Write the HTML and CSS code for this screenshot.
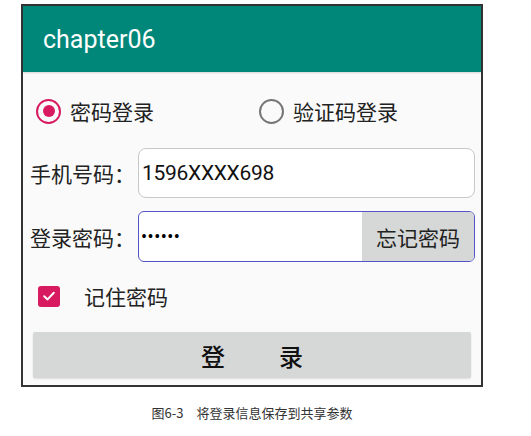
FILE: index.html
```html
<!DOCTYPE html>
<html lang="zh-CN">
<head>
<meta charset="utf-8">
<title>chapter06</title>
<link rel="stylesheet" href="styles.css">
</head>
<body>
<div class="page">
  <div class="phone">
    <div class="appbar">chapter06</div>
    <div class="content">
      <div class="radio-row">
        <div class="radio-item">
          <span class="radio checked"></span>
          <span class="radio-label">密码登录</span>
        </div>
        <div class="radio-item second">
          <span class="radio"></span>
          <span class="radio-label">验证码登录</span>
        </div>
      </div>
      <div class="field-row">
        <span class="field-label">手机号码：</span>
        <div class="input">1596XXXX698</div>
      </div>
      <div class="field-row pw-row">
        <span class="field-label">登录密码：</span>
        <div class="input focused">
          <span class="dots">••••••</span>
          <span class="forget">忘记密码</span>
        </div>
      </div>
      <div class="check-row">
        <span class="checkbox">
          <svg width="14" height="14" viewBox="0 0 14 14"><path d="M2.2 7.2 L5.6 10.4 L11.8 3.8" fill="none" stroke="#fff" stroke-width="2" stroke-linecap="round" stroke-linejoin="round"/></svg>
        </span>
        <span class="check-label">记住密码</span>
      </div>
      <div class="login-btn"><span>登</span><span>录</span></div>
    </div>
  </div>
  <div class="caption">图6-3　将登录信息保存到共享参数</div>
</div>
</body>
</html>
```
FILE: styles.css
```css
html, body {
  margin: 0;
  padding: 0;
  background: #ffffff;
}
body {
  font-family: "Noto Sans CJK SC", "Noto Sans", sans-serif;
  color: #222;
}
.page {
  width: 531px;
  padding-top: 4px;
}
.phone {
  margin-left: 21px;
  width: 458px;
  border: 2px solid #333;
  background: #fafafa;
}
.appbar {
  height: 66px;
  background: #00877a;
  color: #fff;
  font-family: Roboto, "Noto Sans", sans-serif;
  font-size: 25px;
  display: flex;
  align-items: center;
  padding-left: 20px;
  box-shadow: 0 1px 2px rgba(0,0,0,0.15);
}
.content {
  display: flex;
  flex-direction: column;
  padding: 20px 6px 7px 0;
}
.radio-row {
  display: flex;
  height: 38px;
  align-items: center;
  padding-left: 13px;
}
.radio-item {
  display: flex;
  align-items: center;
  gap: 9px;
  width: 223px;
}
.radio-item.second {
  width: auto;
}
.radio {
  width: 25px;
  height: 25px;
  box-sizing: border-box;
  border-radius: 50%;
  border: 2px solid #767676;
  display: flex;
  align-items: center;
  justify-content: center;
}
.radio.checked {
  border: 2.5px solid #d81b60;
}
.radio.checked::after {
  content: "";
  width: 12px;
  height: 12px;
  border-radius: 50%;
  background: #d81b60;
}
.radio-label {
  font-size: 21px;
  line-height: 1;
  color: #222;
}
.field-row {
  display: flex;
  align-items: center;
  margin-top: 18px;
  padding-left: 7px;
}
.pw-row {
  margin-top: 13px;
}
.field-label {
  width: 108px;
  font-size: 21px;
  color: #222;
  white-space: nowrap;
}
.input {
  flex: 1;
  height: 50px;
  box-sizing: border-box;
  border: 1px solid #c8c8c8;
  border-radius: 8px;
  background: #fff;
  display: flex;
  align-items: center;
  padding-left: 3px;
  font-family: Roboto, "Noto Sans", sans-serif;
  font-size: 21px;
  letter-spacing: -0.3px;
  color: #111;
  overflow: hidden;
}
.input.focused {
  height: 51px;
  border: 1.5px solid #5454c8;
  border-radius: 6px;
  padding-left: 2px;
  letter-spacing: 0;
}
.dots {
  flex: 1;
  font-size: 18px;
  letter-spacing: 0.5px;
  color: #000;
}
.forget {
  align-self: stretch;
  width: 112px;
  background: #d6d7d7;
  display: flex;
  align-items: center;
  justify-content: center;
  font-family: "Noto Sans CJK SC", sans-serif;
  font-size: 21px;
  color: #222;
}
.check-row {
  display: flex;
  align-items: center;
  height: 38px;
  margin-top: 15px;
  padding-left: 15px;
  gap: 24px;
}
.checkbox {
  width: 22px;
  height: 21px;
  border-radius: 3px;
  background: #d81b60;
  display: flex;
  align-items: center;
  justify-content: center;
}
.check-label {
  font-size: 21px;
  color: #222;
}
.login-btn {
  margin: 17px 4px 0 10px;
  height: 46px;
  background: #d6d7d7;
  border-radius: 2px;
  box-shadow: 0 1px 2px rgba(0,0,0,0.12);
  display: flex;
  align-items: center;
  justify-content: center;
  gap: 54px;
  font-size: 24px;
  font-weight: 500;
  color: #111;
}
.caption {
  width: 462px;
  margin-left: 21px;
  margin-top: 16px;
  text-align: center;
  font-size: 13px;
  color: #333;
}
```
